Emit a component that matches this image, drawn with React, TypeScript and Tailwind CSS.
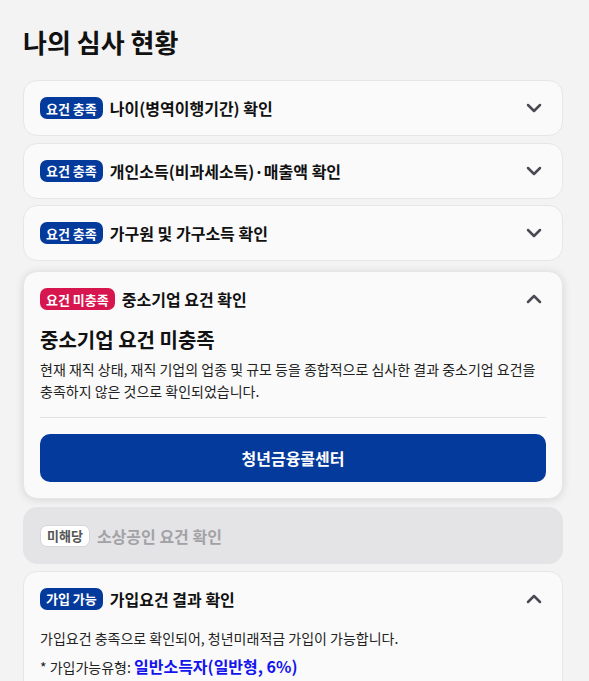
import { ChevronDown, ChevronUp } from 'lucide-react';

const font = { fontFamily: '"Noto Sans CJK KR", "Noto Sans", sans-serif' };

type BadgeTone = 'ok' | 'fail' | 'na';

const Badge = ({ tone, label }: { tone: BadgeTone; label: string }) => {
  const cls =
    tone === 'ok'
      ? 'bg-[#033a9b] text-white'
      : tone === 'fail'
        ? 'bg-[#d7164f] text-white'
        : 'bg-white text-[#555] border border-[#d6d6d8]';
  return (
    <span
      className={`inline-flex items-center h-[22px] px-1.5 rounded-[7px] text-[13px] font-bold leading-none shrink-0 ${cls}`}
    >
      {label}
    </span>
  );
};

const CollapsedCard = ({ label, title }: { label: string; title: string }) => (
  <div className="flex h-[56px] items-center justify-between rounded-[14px] border border-[#e6e6e6] bg-[#fafafa] px-4">
    <div className="flex h-[22px] items-center gap-[7px]">
      <Badge tone="ok" label={label} />
      <span className="text-[16px] font-bold leading-[22px] text-[#111]">{title}</span>
    </div>
    <ChevronDown size={24} strokeWidth={2.5} className="text-[#4a4a55]" />
  </div>
);

export default function App() {
  return (
    <div className="min-h-screen bg-[#f3f3f3] px-[23px] pt-[26px] pb-8" style={font}>
      <h1 className="h-8 text-[26px] font-bold leading-[32px] text-[#111]">나의 심사 현황</h1>

      <div className="mt-[22px] flex w-[540px] flex-col gap-[6.5px]">
        <CollapsedCard label="요건 충족" title="나이(병역이행기간) 확인" />
        <CollapsedCard label="요건 충족" title="개인소득(비과세소득)·매출액 확인" />
        <CollapsedCard label="요건 충족" title="가구원 및 가구소득 확인" />

        {/* expanded: not met */}
        <div className="mt-[3.5px] mb-[1.5px] rounded-[14px] border border-[#e6e6e6] bg-[#fafafa] px-4 pt-4 pb-4 shadow-[0_1px_8px_rgba(0,0,0,0.12)]">
          <div className="flex h-[22px] items-center justify-between">
            <div className="flex items-center gap-[7px]">
              <Badge tone="fail" label="요건 미충족" />
              <span className="text-[16px] font-bold leading-[22px] text-[#111]">중소기업 요건 확인</span>
            </div>
            <ChevronUp size={24} strokeWidth={2.5} className="text-[#4a4a55]" />
          </div>
          <h2 className="mt-[17px] h-[26px] text-[20px] font-bold leading-[26px] text-[#111]">중소기업 요건 미충족</h2>
          <p className="mt-1.5 text-[14px] leading-[21.5px] text-[#222]">
            현재 재직 상태, 재직 기업의 업종 및 규모 등을 종합적으로 심사한 결과 중소기업 요건을
            충족하지 않은 것으로 확인되었습니다.
          </p>
          <div className="mt-[15px] h-px bg-[#e2e2e2]" />
          <button className="mt-4 h-12 w-full rounded-[10px] bg-[#033a9b] text-[16px] font-bold text-white">
            청년금융콜센터
          </button>
        </div>

        {/* not applicable */}
        <div className="flex h-[57px] items-center rounded-[14px] border border-[#e4e4e6] bg-[#e4e4e6] px-4">
          <div className="flex h-[22px] items-center gap-[7px]">
            <Badge tone="na" label="미해당" />
            <span className="text-[16px] font-bold leading-[22px] text-[#a2a2a6]">소상공인 요건 확인</span>
          </div>
        </div>

        {/* result */}
        <div className="rounded-[14px] border border-[#e6e6e6] bg-[#fafafa] px-4 pt-4 pb-5">
          <div className="flex h-[22px] items-center justify-between">
            <div className="flex items-center gap-[7px]">
              <Badge tone="ok" label="가입 가능" />
              <span className="text-[16px] font-bold leading-[22px] text-[#111]">가입요건 결과 확인</span>
            </div>
            <ChevronUp size={24} strokeWidth={2.5} className="text-[#4a4a55]" />
          </div>
          <p className="mt-[18px] h-5 text-[14px] leading-[20px] text-[#222]">
            가입요건 충족으로 확인되어, 청년미래적금 가입이 가능합니다.
          </p>
          <p className="mt-1.5 h-6 text-[14px] leading-[24px] text-[#222]">
            * 가입가능유형: <span className="text-[16px] font-bold text-[#1414ee]">일반소득자(일반형, 6%)</span>
          </p>
        </div>
      </div>
    </div>
  );
}
